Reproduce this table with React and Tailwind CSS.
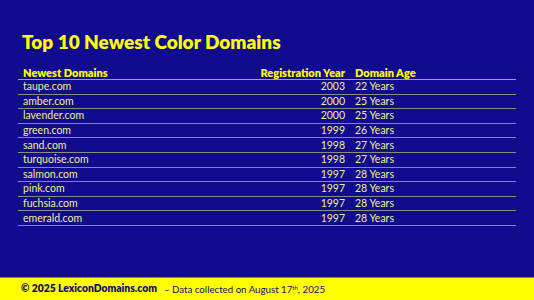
import React from "react";

const ROWS = [
  { domain: "taupe.com", year: 2003, age: "22 Years" },
  { domain: "amber.com", year: 2000, age: "25 Years" },
  { domain: "lavender.com", year: 2000, age: "25 Years" },
  { domain: "green.com", year: 1999, age: "26 Years" },
  { domain: "sand.com", year: 1998, age: "27 Years" },
  { domain: "turquoise.com", year: 1998, age: "27 Years" },
  { domain: "salmon.com", year: 1997, age: "28 Years" },
  { domain: "pink.com", year: 1997, age: "28 Years" },
  { domain: "fuchsia.com", year: 1997, age: "28 Years" },
  { domain: "emerald.com", year: 1997, age: "28 Years" },
];

export default function App() {
  return (
    <div
      className="w-[534px] h-[300px] bg-[#110b8e] flex flex-col overflow-hidden"
      style={{ fontFamily: "Lato, 'Open Sans', sans-serif" }}
    >
      <div className="flex-1 pl-[18px] pr-[18px] pt-[30px]">
        <h1 className="text-[19px] leading-[24px] font-extrabold text-[#ffff00] pl-[4px] tracking-[0px]">
          Top 10 Newest Color Domains
        </h1>

        <div className="mt-[11px]">
          {/* header */}
          <div className="flex items-end h-[15px] border-b border-[#b0b040] text-[11px] font-extrabold text-[#ffff00] leading-[13px]">
            <div className="flex-1 pl-[5px]">Newest Domains</div>
            <div className="w-[130px] text-right">Registration Year</div>
            <div className="w-[171px] pl-[10px]">Domain Age</div>
          </div>
          {ROWS.map((r) => (
            <div
              key={r.domain}
              className="flex items-center h-[14.6px] border-b border-[#8c8c80] text-[10.5px] text-[#f0f08c] leading-[13px]"
            >
              <div className="flex-1 pl-[5px]">{r.domain}</div>
              <div className="w-[130px] text-right">{r.year}</div>
              <div className="w-[171px] pl-[10px]">{r.age}</div>
            </div>
          ))}
        </div>
      </div>

      <div className="h-[23px] bg-[#ffff00] border-t border-[#8a8a3a] flex items-center pl-[21px] text-[#120c6e]">
        <span className="font-extrabold text-[10.3px]">© 2025 LexiconDomains.com</span>
        <span className="ml-[7px] text-[9.7px]">
          – Data collected on August 17<sup className="text-[6px]">th</sup>, 2025
        </span>
      </div>
    </div>
  );
}
